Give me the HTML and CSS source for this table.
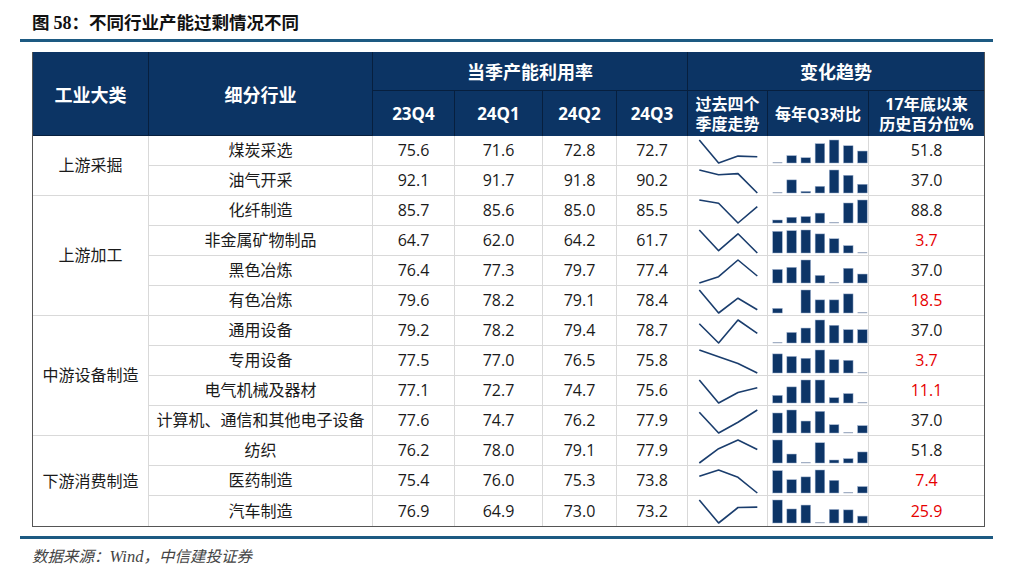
FILE: index.html
```html
<!DOCTYPE html>
<html lang="zh-CN">
<head>
<meta charset="utf-8">
<title>图 58</title>
<link rel="stylesheet" href="styles.css">
</head>
<body>
<div class="page">
  <h1 class="title">图 <span class="num">58</span>：不同行业产能过剩情况不同</h1>
  <div class="rule"></div>
  <table class="tbl">
    <colgroup>
      <col style="width:116px"><col style="width:224px"><col style="width:82px"><col style="width:88px"><col style="width:74px"><col style="width:71px"><col style="width:80px"><col style="width:101px"><col style="width:115px">
    </colgroup>
    <thead>
      <tr class="h1">
        <th rowspan="2">工业大类</th>
        <th rowspan="2">细分行业</th>
        <th colspan="4">当季产能利用率</th>
        <th colspan="3" class="last">变化趋势</th>
      </tr>
      <tr class="h2">
        <th>23Q4</th><th>24Q1</th><th>24Q2</th><th>24Q3</th>
        <th class="small">过去四个<br>季度走势</th>
        <th class="small">每年Q3对比</th>
        <th class="small last">17年底以来<br>历史百分位%</th>
      </tr>
    </thead>
    <tbody>
      <tr><td rowspan="2" class="grp">上游采掘</td><td>煤炭采选</td><td>75.6</td><td>71.6</td><td>72.8</td><td>72.7</td><td class="spark" data-y="4,27,20.1,20.7"></td><td class="bars" data-h="0,.32,.23,.84,1,.75,.52"></td><td class="last">51.8</td></tr>
      <tr><td>油气开采</td><td>92.1</td><td>91.7</td><td>91.8</td><td>90.2</td><td class="spark" data-y="4,8.8,7.6,27"></td><td class="bars" data-h="0,.57,.07,.29,1,.77,.38"></td><td class="last">37.0</td></tr>
      <tr><td rowspan="4" class="grp">上游加工</td><td>化纤制造</td><td>85.7</td><td>85.6</td><td>85.0</td><td>85.5</td><td class="spark" data-y="4,7.3,27,10.6"></td><td class="bars" data-h=".13,.25,.28,.43,0,.87,1"></td><td class="last">88.8</td></tr>
      <tr><td>非金属矿物制品</td><td>64.7</td><td>62.0</td><td>64.2</td><td>61.7</td><td class="spark" data-y="4,24.7,7.8,27"></td><td class="bars" data-h=".94,.97,1,.83,.62,.32,0"></td><td class="last red">3.7</td></tr>
      <tr><td>黑色冶炼</td><td>76.4</td><td>77.3</td><td>79.7</td><td>77.4</td><td class="spark" data-y="27,20.7,4,20"></td><td class="bars" data-h=".59,.68,1,.33,0,.64,.39"></td><td class="last">37.0</td></tr>
      <tr><td>有色冶炼</td><td>79.6</td><td>78.2</td><td>79.1</td><td>78.4</td><td class="spark" data-y="4,27,12.2,23.7"></td><td class="bars" data-h=".2,x,1,.57,.57,.83,0"></td><td class="last red">18.5</td></tr>
      <tr><td rowspan="4" class="grp">中游设备制造</td><td>通用设备</td><td>79.2</td><td>78.2</td><td>79.4</td><td>78.7</td><td class="spark" data-y="7.8,27,4,17.4"></td><td class="bars" data-h="0,.46,.65,1,.77,.58,.58"></td><td class="last">37.0</td></tr>
      <tr><td>专用设备</td><td>77.5</td><td>77.0</td><td>76.5</td><td>75.8</td><td class="spark" data-y="4,10.8,17.5,27"></td><td class="bars" data-h=".83,.72,.64,1,.58,.55,0"></td><td class="last red">3.7</td></tr>
      <tr><td>电气机械及器材</td><td>77.1</td><td>72.7</td><td>74.7</td><td>75.6</td><td class="spark" data-y="4,27,16.5,11.8"></td><td class="bars" data-h=".33,.7,1,1,.23,.41,0"></td><td class="last red">11.1</td></tr>
      <tr><td>计算机、通信和其他电子设备</td><td>77.6</td><td>74.7</td><td>76.2</td><td>77.9</td><td class="spark" data-y="6.2,27,16.2,4"></td><td class="bars" data-h=".87,1,.52,.94,.36,0,.32"></td><td class="last">37.0</td></tr>
      <tr><td rowspan="3" class="grp bot">下游消费制造</td><td>纺织</td><td>76.2</td><td>78.0</td><td>79.1</td><td>77.9</td><td class="spark" data-y="27,12.7,4,13.5"></td><td class="bars" data-h="1,.39,0,.88,.13,.19,.48"></td><td class="last">51.8</td></tr>
      <tr><td>医药制造</td><td>75.4</td><td>76.0</td><td>75.3</td><td>73.8</td><td class="spark" data-y="10.3,4,11.3,27"></td><td class="bars" data-h=".97,.58,.70,1,.55,0,.28"></td><td class="last red">7.4</td></tr>
      <tr class="bot"><td>汽车制造</td><td>76.9</td><td>64.9</td><td>73.0</td><td>73.2</td><td class="spark" data-y="4,27,11.5,11.1"></td><td class="bars" data-h="1,.61,.78,0,.59,.57,.30"></td><td class="last red">25.9</td></tr>
    </tbody>
  </table>
  <div class="rule rule-foot"></div>
  <p class="source">数据来源：<span class="wind">Wind</span>，中信建投证券</p>
</div>
<script src="script.js"></script>
</body>
</html>
```
FILE: styles.css
```css
* { box-sizing: border-box; }
html, body { margin: 0; padding: 0; background: #fff; }
body {
  font-family: "Open Sans", "Noto Sans CJK SC", sans-serif;
  color: #1a1a1a;
}
.page { width: 1027px; height: 581px; padding-top: 11px; }
.title {
  margin: 0 0 0 32px;
  font-family: "Noto Sans CJK SC", sans-serif;
  font-size: 17.5px;
  line-height: 22px;
  font-weight: 700;
  color: #111;
}
.title .num { font-family: "Liberation Serif", serif; font-weight: 700; font-size: 18px; }
.rule {
  margin: 5px 0 0 20px;
  width: 973px;
  height: 3px;
  background: #1d5a82;
}
.tbl {
  margin: 10px 0 0 32px;
  width: 953px;
  table-layout: fixed;
  border-collapse: separate;
  border-spacing: 0;
  border-left: 1px solid #555;
  border-right: 1px solid #555;
  border-bottom: 1px solid #555;
}
.tbl th {
  background: #0c3464;
  color: #fff;
  font-weight: 700;
  font-size: 17px;
  padding: 0;
  text-align: center;
  vertical-align: middle;
  border-right: 1px solid #071f3e;
  border-bottom: 1px solid #071f3e;
  font-family: "Open Sans", "Noto Sans CJK SC", sans-serif;
}
.h1 th { height: 39px; font-size: 18px; }
.h2 th { height: 45px; border-bottom: none; }
.tbl th.small { font-size: 16px; line-height: 20px; }
.tbl th.last, .tbl td.last { border-right: none; }
.tbl td {
  height: 30px;
  padding: 0;
  text-align: center;
  vertical-align: middle;
  font-size: 16px;
  line-height: 19px;
  border-right: 1px solid #d9d9d9;
  border-bottom: 1px solid #d9d9d9;
  white-space: nowrap;
}
.tbl tr.bot td, .tbl td.bot { border-bottom: none; }
.tbl td.red { color: #e60000; }
.tbl td.spark, .tbl td.bars { vertical-align: top; }
.tbl td svg { display: block; }
.rule-foot { margin-top: 9px; }
.source {
  margin: 6px 0 0 32px;
  font-size: 15.5px;
  line-height: 21px;
  font-style: italic;
  color: #444;
  font-family: "Noto Sans CJK SC", sans-serif;
}
.source .wind { font-family: "Liberation Serif", serif; font-size: 16.5px; }
```
FILE: script.js
```js
const NS = 'http://www.w3.org/2000/svg';
document.querySelectorAll('.spark').forEach(function (el) {
  var ys = el.dataset.y.split(',').map(Number);
  var xs = [11.3, 30.6, 50, 69.3];
  var svg = document.createElementNS(NS, 'svg');
  svg.setAttribute('width', '80');
  svg.setAttribute('height', '29');
  svg.setAttribute('viewBox', '0 0 80 29');
  var pl = document.createElementNS(NS, 'polyline');
  pl.setAttribute('points', ys.map(function (y, i) { return xs[i] + ',' + y; }).join(' '));
  pl.setAttribute('fill', 'none');
  pl.setAttribute('stroke', '#1a3d6d');
  pl.setAttribute('stroke-width', '1.6');
  pl.setAttribute('stroke-linejoin', 'round');
  svg.appendChild(pl);
  el.appendChild(svg);
});
document.querySelectorAll('.bars').forEach(function (el) {
  var hs = el.dataset.h.split(',');
  var svg = document.createElementNS(NS, 'svg');
  svg.setAttribute('width', '100');
  svg.setAttribute('height', '29');
  svg.setAttribute('viewBox', '0 0 100 29');
  hs.forEach(function (h, i) {
    if (h === 'x') return;
    var v = Number(h);
    var x = 4.7 + i * 14.15;
    if (v === 0) {
      var ln = document.createElementNS(NS, 'rect');
      ln.setAttribute('x', x);
      ln.setAttribute('y', 26.2);
      ln.setAttribute('width', 9.6);
      ln.setAttribute('height', 1);
      ln.setAttribute('fill', '#8c9cb6');
      svg.appendChild(ln);
      return;
    }
    var hh = v * 23;
    var r = document.createElementNS(NS, 'rect');
    r.setAttribute('x', x);
    r.setAttribute('y', 27 - hh);
    r.setAttribute('width', 9.6);
    r.setAttribute('height', hh);
    r.setAttribute('fill', '#0d3567');
    r.setAttribute('stroke', '#9fb2cf');
    r.setAttribute('stroke-width', '0.5');
    svg.appendChild(r);
  });
  el.appendChild(svg);
});
```
